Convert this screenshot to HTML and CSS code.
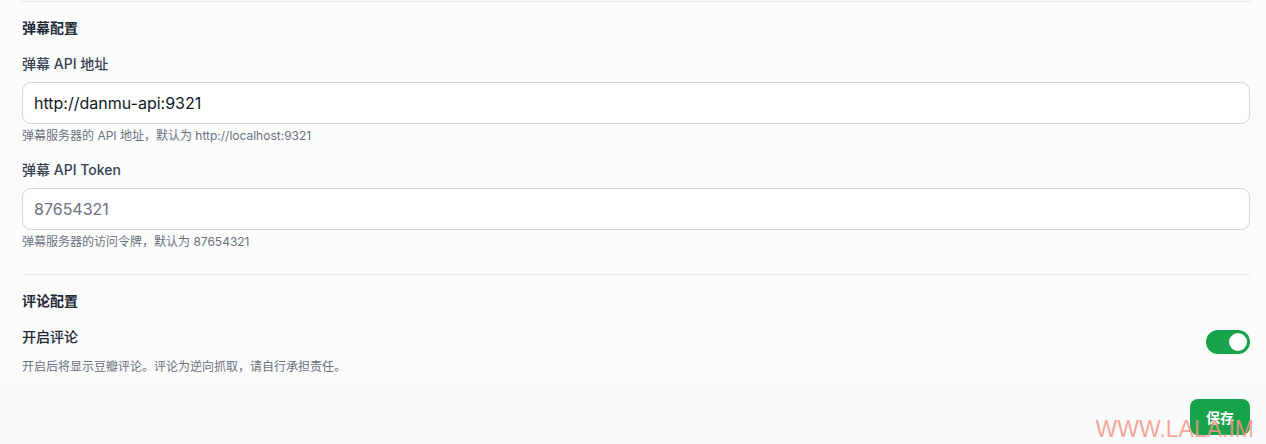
FILE: index.html
```html
<!DOCTYPE html>
<html lang="zh-CN">
<head>
<meta charset="utf-8">
<title>设置</title>
<link rel="stylesheet" href="styles.css">
</head>
<body>
<div class="page">
  <div class="card">
    <section class="section">
      <h3 class="section-title">弹幕配置</h3>
      <div class="field">
        <label class="label" for="api">弹幕 API 地址</label>
        <input class="input" id="api" type="text" value="http://danmu-api:9321">
        <p class="help">弹幕服务器的 API 地址，默认为 http://localhost:9321</p>
      </div>
      <div class="field">
        <label class="label" for="token">弹幕 API Token</label>
        <input class="input" id="token" type="text" placeholder="87654321">
        <p class="help">弹幕服务器的访问令牌，默认为 87654321</p>
      </div>
    </section>
    <section class="section">
      <h3 class="section-title">评论配置</h3>
      <div class="switch-row">
        <div class="switch-text">
          <div class="label">开启评论</div>
          <p class="help">开启后将显示豆瓣评论。评论为逆向抓取，请自行承担责任。</p>
        </div>
        <div class="toggle"><span class="knob"></span></div>
      </div>
    </section>
  </div>
  <div class="actions">
    <button class="btn-save" type="button">保存</button>
  </div>
  <div class="watermark">WWW.LALA.IM</div>
</div>
</body>
</html>
```

FILE: styles.css
```css
* { box-sizing: border-box; }
html, body {
  margin: 0;
  padding: 0;
  background: #f9fafb;
  font-family: Inter, "Noto Sans CJK SC", sans-serif;
  color: #111827;
}
.page {
  position: relative;
  width: 1266px;
  height: 444px;
  overflow: hidden;
  padding-top: 1px;
}
.card {
  background: linear-gradient(180deg, #fbfcfc 0%, #fbfbfb 100%);
  padding: 0 16px 4px 22px;
}
.section {
  border-top: 1px solid #e5e7eb;
  padding-top: 16px;
}
.section + .section {
  margin-top: 24px;
}
.section-title {
  margin: 0;
  font-size: 14px;
  line-height: 20px;
  font-weight: 600;
  color: #1f2937;
}
.field {
  margin-top: 16px;
}
.field + .field {
  margin-top: 16px;
}
.label {
  display: block;
  font-size: 14px;
  line-height: 20px;
  font-weight: 500;
  color: #374151;
  margin-bottom: 8px;
}
.input {
  display: block;
  width: 100%;
  height: 42px;
  padding: 0 11px;
  border: 1px solid #d4d4dc;
  border-radius: 9px;
  background: #ffffff;
  font-family: Inter, "Noto Sans CJK SC", sans-serif;
  font-size: 16px;
  color: #111827;
  outline: none;
}
.input::placeholder {
  color: #6b7280;
  opacity: 1;
}
.help {
  margin: 4px 0 0;
  font-size: 12px;
  line-height: 16px;
  color: #6b7280;
}
.switch-row {
  display: flex;
  justify-content: space-between;
  align-items: flex-start;
  margin-top: 16px;
}
.switch-text .label {
  margin-bottom: 0;
  color: #1f2937;
}
.switch-text .help {
  margin-top: 12px;
}
.toggle {
  display: flex;
  justify-content: flex-end;
  align-items: center;
  width: 44px;
  height: 24px;
  margin-top: 3px;
  padding: 0 3px;
  border-radius: 12px;
  background: #16a34a;
}
.knob {
  width: 18px;
  height: 18px;
  border-radius: 50%;
  background: #ffffff;
}
.actions {
  display: flex;
  justify-content: flex-end;
  padding: 20px 16px 0 22px;
}
.btn-save {
  height: 36px;
  padding: 0 16px;
  border: none;
  border-radius: 8px;
  background: #16a34a;
  color: #ffffff;
  font-family: Inter, "Noto Sans CJK SC", sans-serif;
  font-size: 14px;
  font-weight: 600;
}
.watermark {
  position: absolute;
  z-index: 2;
  right: 12px;
  bottom: 2px;
  font-family: "Liberation Sans", Arial, sans-serif;
  font-size: 23px;
  line-height: 26px;
  color: rgba(244, 150, 138, 0.85);
  pointer-events: none;
}
```
